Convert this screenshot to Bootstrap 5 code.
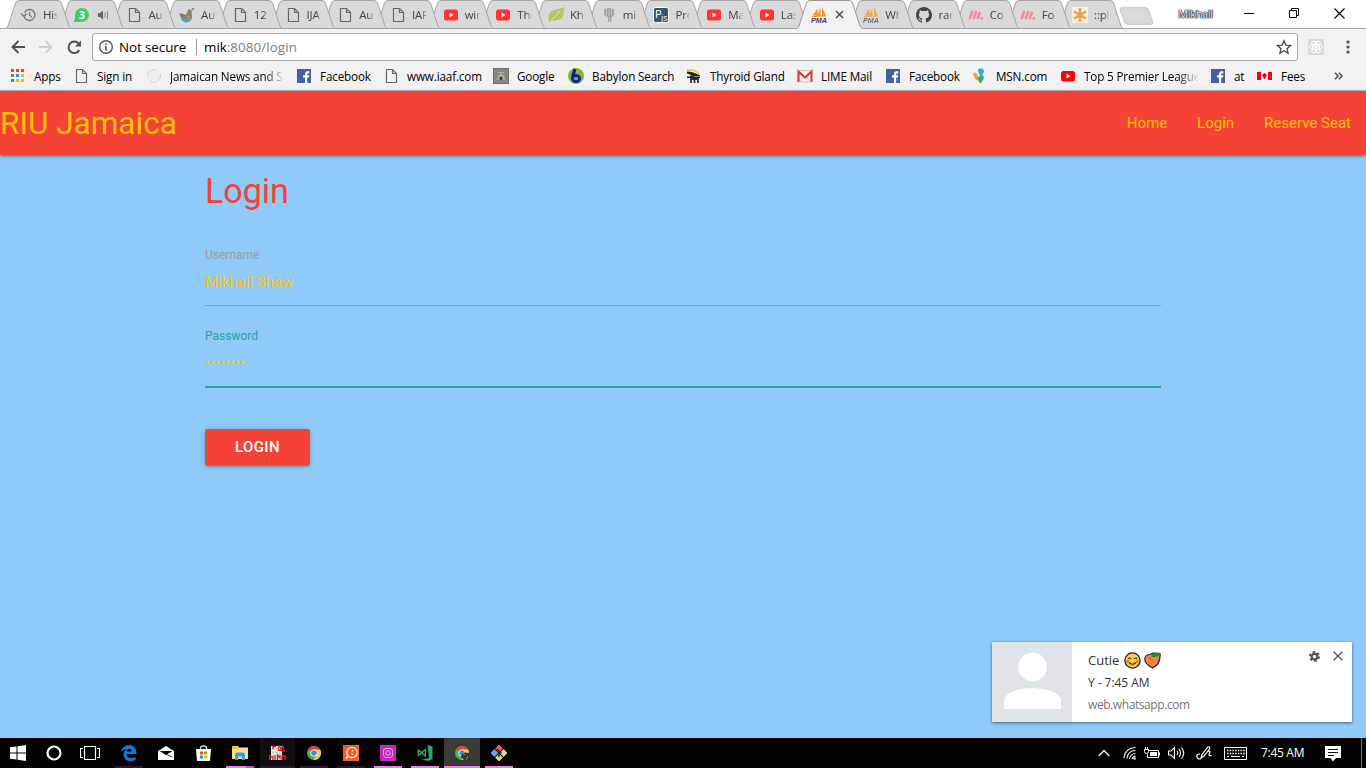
<!DOCTYPE html>
<html lang="en">
<head>
<meta charset="utf-8">
<meta name="viewport" content="width=device-width, initial-scale=1">
<title>RIU Jamaica</title>
<link href="https://cdn.jsdelivr.net/npm/bootstrap@5.3.0/dist/css/bootstrap.min.css" rel="stylesheet">
<script src="https://cdn.jsdelivr.net/npm/bootstrap@5.3.0/dist/js/bootstrap.bundle.min.js"></script>
<style>
  body { width:1366px; height:768px; font-family:"Open Sans","Noto Sans",sans-serif; font-size:12px; line-height:16px; color:#000; }
  svg { display:block; flex:none; }
  /* browser tabs */
  .tabstrip { height:29px; background:#fff; padding-left:6px; border-bottom:1px solid #a6a6a6; }
  .btab { width:65px; height:29px; margin-right:-12.3px; padding:0 0 0 15px; flex:none; margin-bottom:-1px; }
  .btab.after { margin-right:-12.8px; }
  .btab .shape { position:absolute; left:0; top:0; z-index:-1; }
  .btab .ttl { width:19px; margin-left:6px; white-space:nowrap; color:#444; font-size:11.5px; letter-spacing:-.2px;
    -webkit-mask-image:linear-gradient(90deg,#000 50%,transparent 82%); mask-image:linear-gradient(90deg,#000 50%,transparent 82%); }
  .newtab { margin-left:9px; margin-top:7px; }
  .profile { font-size:11px; letter-spacing:-.35px; color:#fff; text-shadow:0 0 1px #000,0 0 1px #000,0 0 1px #000,0 0 2px #333; width:38px; margin-left:24px; margin-top:6px; }
  .winbtns { margin-left:28px; gap:35px; margin-top:8px; }
  /* toolbar */
  .toolbar { height:36px; background:#f2f2f2; padding:4px 10px 0 10px; }
  .omni { width:1206px; height:28px; background:#fff; border:1px solid #a9a9a9; border-radius:3px; margin-left:10px; padding:0 5px; font-size:13.4px; letter-spacing:-.08px; }
  .omni .sep { width:1px; height:16px; background:#999; margin:0 7px 0 10px; }
  .bookbar { height:26px; background:#f2f2f2; padding:0 0 4px 10px; border-bottom:1px solid #b6b4b6; }
  .bm { flex:none; gap:8px; white-space:nowrap; font-size:11.7px; letter-spacing:-.15px; }
  .fadeout { -webkit-mask-image:linear-gradient(90deg,#000 82%,transparent); mask-image:linear-gradient(90deg,#000 82%,transparent); }
  /* web page */
  .site { height:647px; background:#90caf9; font-family:Roboto,sans-serif; }
  .sitenav { height:64px; background:#f44336; padding:0; box-shadow:0 2px 2px 0 rgba(0,0,0,.14),0 3px 1px -2px rgba(0,0,0,.12),0 1px 5px 0 rgba(0,0,0,.2); }
  .sitenav .navbar-brand { color:#ffc107; font-size:31.5px; line-height:64px; padding:2px 0 0; margin:0; }
  .sitenav .navbar-nav .nav-link { color:#ffc107; font-size:15px; line-height:64px; padding:0 15px; }
  .formwrap { width:956px; margin:0 auto; }
  .formwrap h4 { font-size:34.2px; line-height:38px; font-weight:400; color:#f44336; margin:17px 0 0; letter-spacing:-.1px; }
  .fld label { display:block; font-size:12px; line-height:14px; color:#9e9e9e; }
  .fld .val { height:44px; font-size:15px; line-height:41px; color:#ffc107; border-bottom:1px solid #9e9e9e; }
  .fld.on label { color:#26a69a; }
  .fld.on .val { border-bottom:2px solid #26a69a; height:45px; }
  .dots { letter-spacing:-.1px; }
  .caret { width:1px; height:17px; background:#ffc107; }
  .btn-red { width:105px; height:36px; background:#f44336; color:#fff; border:0; border-radius:2px; font-size:15px; line-height:36px; padding:0; letter-spacing:.4px; font-weight:500;
    box-shadow:0 2px 2px 0 rgba(0,0,0,.14),0 3px 1px -2px rgba(0,0,0,.12),0 1px 5px 0 rgba(0,0,0,.2); }
  .btn-red:hover { background:#f44336; color:#fff; }
  /* notification */
  .note { position:absolute; right:14px; bottom:16px; width:360px; height:80px; background:#fff; box-shadow:0 1px 3px rgba(0,0,0,.5); font-family:"Open Sans",sans-serif; }
  .note .who { font-size:13px; line-height:18px; color:#333; }
  .note .msg { color:#333; letter-spacing:-.05px; }
  .note .src { color:#777; font-size:12px; letter-spacing:-.42px; }
  /* taskbar */
  .taskbar { height:30px; background:#040301; color:#fff; }
  .tk { width:28px; margin-right:9px; height:30px; padding-top:2px; flex:none; border-bottom:2px solid transparent; }
  .tk.idle { border-color:#2b182c; }
  .tk.run { border-color:#f27bee; }
  .tk.multi { border-image:linear-gradient(90deg,#f27bee 70%,#b85fb8 70%) 1; border-width:0 0 2px; }
  .tk.front { width:36px; margin:0 5px 0 -4px; background:#3b3a39; }
</style>
</head>
<body class="d-flex flex-column overflow-hidden m-0">

<svg width="0" height="0" class="position-absolute">
  <defs>
    <symbol id="tab" viewBox="0 0 65 29"><path d="M0 28.500 2 26 9.500 3Q10.300 .5 13 .5H52Q54.500 .5 55.500 3L63 26 65 28.500Z" fill="#d9d9d9" stroke="#a6a6a6"/></symbol>
    <symbol id="page" viewBox="0 0 16 16"><path d="M3.500 1.500H9.500L13.500 5.500V14.500H3.500ZM9.500 1.500V5.500H13.500" fill="none" stroke="#666" stroke-width="1.200"/></symbol>
    <symbol id="yt" viewBox="0 0 16 16"><rect x="1" y="2.500" width="14" height="11" rx="2.500" fill="#f33"/><path d="M6.500 5.500V10.500L10.500 8Z" fill="#fff"/></symbol>
    <symbol id="fb" viewBox="0 0 16 16"><path d="M1 1H15V15H1Z" fill="#4460a0"/><path d="M9 15V9.500H7V7.300H9V5.800Q9 3.300 11.500 3.300H13.300V5.400H12Q11.200 5.400 11.200 6.200V7.300H13.300L13 9.500H11.200V15Z" fill="#fff"/></symbol>
    <symbol id="pma" viewBox="0 0 16 16"><path d="M6.500 1.500V8.500H1.500ZM11 0 15 8.500 11 9ZM9.500 1V9H5.500Z" fill="#f8981d"/><path d="M1 9.500 15 9" stroke="#f8981d"/><text x="0" y="15.600" font-family="Liberation Sans" font-weight="bold" font-style="italic" font-size="7" textLength="16" lengthAdjust="spacingAndGlyphs" fill="#3f3f78">PMA</text></symbol>
    <symbol id="mm" viewBox="0 0 16 16"><path d="M1.500 12 4.500 4M5.500 12 8.500 4M9.500 12 12 5" stroke="#f58a95" stroke-width="2.500"/><circle cx="13.800" cy="11.300" r="1.300" fill="#f58a95"/></symbol>
    <symbol id="chrome" viewBox="0 0 16 16"><circle cx="8" cy="8" r="7" fill="#4caf50"/><path d="M8 8 1.900 4.500A7 7 0 0 1 14.100 4.500Z" fill="#e0453a"/><path d="M8 4.500H14.100A7 7 0 0 1 7.500 15L11 9.700Z" fill="#fbc92e"/><circle cx="8" cy="8" r="3.600" fill="#fff"/><circle cx="8" cy="8" r="2.800" fill="#4285f4"/></symbol>
  </defs>
</svg>

<!-- tab strip -->
<header class="tabstrip d-flex flex-shrink-0">
  <div class="btab position-relative d-flex align-items-center" style="z-index:30"><svg class="shape" width="65" height="29"><use href="#tab"/></svg>
    <svg width="16" height="16" viewBox="0 0 16 16" fill="none" stroke="#777" stroke-width="1.300"><path d="M3 9A5.500 5.500 0 1 0 3.500 5.500M0 6.500 3 9.500 5.500 6.500M8.500 5V8.500L11 10"/></svg><span class="ttl">His</span></div>
  <div class="btab position-relative d-flex align-items-center" style="z-index:29"><svg class="shape" width="65" height="29"><use href="#tab"/></svg>
    <svg width="16" height="16" viewBox="0 0 16 16"><path d="M0 15 1 11V8A7 7 0 1 1 8 15Z" fill="#45cb62"/><text x="5" y="12" font-size="10.500" font-weight="bold" fill="#fff">3</text></svg>
    <svg width="12" height="12" viewBox="0 0 12 12" class="ms-2"><path d="M0 4H2L5 1.500V10.500L2 8H0Z" fill="#666"/><path d="M7 3.500V8.500M9.500 2V10" stroke="#888"/></svg></div>
  <div class="btab position-relative d-flex align-items-center" style="z-index:28"><svg class="shape" width="65" height="29"><use href="#tab"/></svg><svg width="16" height="16"><use href="#page"/></svg><span class="ttl">Au</span></div>
  <div class="btab position-relative d-flex align-items-center" style="z-index:27"><svg class="shape" width="65" height="29"><use href="#tab"/></svg>
    <svg width="16" height="16" viewBox="0 0 16 16"><path d="M0 6.500Q5 6 7 8L9.500 2 12.500 3 13 11 9 15 3 13Z" fill="#8a8063"/><path d="M2 10Q6 13 13.500 10Q12 15.500 6 15.500Q2 14 2 10" fill="#38a6d8"/><path d="M8 8 12 9.500 9 13Z" fill="#ef7d3b"/><circle cx="14" cy="2" r="1.300" fill="#55b95a"/></svg><span class="ttl">Au</span></div>
  <div class="btab position-relative d-flex align-items-center" style="z-index:26"><svg class="shape" width="65" height="29"><use href="#tab"/></svg><svg width="16" height="16"><use href="#page"/></svg><span class="ttl">12</span></div>
  <div class="btab position-relative d-flex align-items-center" style="z-index:25"><svg class="shape" width="65" height="29"><use href="#tab"/></svg><svg width="16" height="16"><use href="#page"/></svg><span class="ttl">IJA</span></div>
  <div class="btab position-relative d-flex align-items-center" style="z-index:24"><svg class="shape" width="65" height="29"><use href="#tab"/></svg><svg width="16" height="16"><use href="#page"/></svg><span class="ttl">Au</span></div>
  <div class="btab position-relative d-flex align-items-center" style="z-index:23"><svg class="shape" width="65" height="29"><use href="#tab"/></svg><svg width="16" height="16"><use href="#page"/></svg><span class="ttl">IAF</span></div>
  <div class="btab position-relative d-flex align-items-center" style="z-index:22"><svg class="shape" width="65" height="29"><use href="#tab"/></svg><svg width="16" height="16"><use href="#yt"/></svg><span class="ttl">wir</span></div>
  <div class="btab position-relative d-flex align-items-center" style="z-index:21"><svg class="shape" width="65" height="29"><use href="#tab"/></svg><svg width="16" height="16"><use href="#yt"/></svg><span class="ttl">The</span></div>
  <div class="btab position-relative d-flex align-items-center" style="z-index:20"><svg class="shape" width="65" height="29"><use href="#tab"/></svg>
    <svg width="16" height="16" viewBox="0 0 16 16"><path d="M1 14Q-1 5 6 3Q12 2 16 0Q17 12 10 13Q6 14.500 3.500 13L1.500 15.500Z" fill="#b1c763"/><path d="M3 13Q8 10 12 4" stroke="#d9e0bd" fill="none"/></svg><span class="ttl">Kh</span></div>
  <div class="btab position-relative d-flex align-items-center" style="z-index:19"><svg class="shape" width="65" height="29"><use href="#tab"/></svg>
    <svg width="16" height="16" viewBox="0 0 16 16"><path d="M3 2.500Q8-.5 13 2.500V8L10.500 10V14L8.500 15.500 7 14V10L3.500 8.500Z" fill="#a0a0a0"/><path d="M5.500 2V8.500M8 2V9M10.500 2V8.500M8.500 10V14" stroke="#d0d0d0" stroke-width=".8" fill="none"/></svg><span class="ttl">mi</span></div>
  <div class="btab position-relative d-flex align-items-center" style="z-index:18"><svg class="shape" width="65" height="29"><use href="#tab"/></svg>
    <svg width="16" height="16" viewBox="0 0 16 16"><rect x=".5" y=".5" width="15" height="15" rx="2" fill="#325878" stroke="#fff"/><text x="2" y="11" font-size="11" fill="#fff">P</text><text x="8" y="13.500" font-size="8.500" fill="#fff">js</text></svg><span class="ttl">Pro</span></div>
  <div class="btab position-relative d-flex align-items-center" style="z-index:17"><svg class="shape" width="65" height="29"><use href="#tab"/></svg><svg width="16" height="16"><use href="#yt"/></svg><span class="ttl">Ma</span></div>
  <div class="btab position-relative d-flex align-items-center" style="z-index:16"><svg class="shape" width="65" height="29"><use href="#tab"/></svg><svg width="16" height="16"><use href="#yt"/></svg><span class="ttl">Las</span></div>
  <div class="btab position-relative d-flex align-items-center" style="z-index:40;padding-left:14px"><svg class="shape" width="65" height="29" viewBox="0 0 65 29"><path d="M0 28.500 2 26 9.500 3Q10.300 .5 13 .5H52Q54.500 .5 55.500 3L63 26 65 28.500V29H0Z" fill="#f2f2f2"/><path d="M0 28.500 2 26 9.500 3Q10.300 .5 13 .5H52Q54.500 .5 55.500 3L63 26 65 28.500" fill="none" stroke="#999"/></svg>
    <svg width="16" height="16"><use href="#pma"/></svg><svg width="9" height="9" viewBox="0 0 9 9" class="ms-2"><path d="M1 1 8 8M8 1 1 8" stroke="#555" stroke-width="1.600"/></svg></div>
  <div class="btab after position-relative d-flex align-items-center" style="z-index:14;padding-left:14px"><svg class="shape" width="65" height="29"><use href="#tab"/></svg><svg width="16" height="16" opacity=".7"><use href="#pma"/></svg><span class="ttl">Wh</span></div>
  <div class="btab after position-relative d-flex align-items-center" style="z-index:13"><svg class="shape" width="65" height="29"><use href="#tab"/></svg>
    <svg width="16" height="16" viewBox="0 0 16 16"><path fill="#444" d="M8 0C3.580 0 0 3.580 0 8c0 3.540 2.290 6.530 5.470 7.590.4.070.55-.17.55-.38 0-.19-.01-.82-.01-1.490-2.010.37-2.530-.49-2.690-.94-.09-.23-.48-.94-.82-1.130-.28-.15-.68-.52-.01-.53.63-.01 1.080.58 1.230.82.72 1.210 1.870.87 2.330.66.070-.52.280-.87.510-1.070-1.780-.2-3.640-.89-3.640-3.950 0-.87.310-1.590.82-2.150-.08-.2-.36-1.020.08-2.120 0 0 .67-.21 2.200.82a7.600 7.600 0 0 1 4 0c1.530-1.040 2.200-.82 2.200-.82.44 1.100.16 1.920.08 2.120.51.560.82 1.270.82 2.150 0 3.070-1.870 3.750-3.650 3.950.29.250.54.730.54 1.480 0 1.070-.01 1.930-.01 2.200 0 .21.150.46.55.38A8 8 0 0 0 8 0z"/></svg><span class="ttl">ran</span></div>
  <div class="btab after position-relative d-flex align-items-center" style="z-index:12;padding-left:14px"><svg class="shape" width="65" height="29"><use href="#tab"/></svg><svg width="16" height="16"><use href="#mm"/></svg><span class="ttl">Co</span></div>
  <div class="btab after position-relative d-flex align-items-center" style="z-index:11;padding-left:14px"><svg class="shape" width="65" height="29"><use href="#tab"/></svg><svg width="16" height="16"><use href="#mm"/></svg><span class="ttl">Fo</span></div>
  <div class="btab after position-relative d-flex align-items-center" style="z-index:10;padding-left:14px"><svg class="shape" width="65" height="29"><use href="#tab"/></svg>
    <svg width="16" height="16" viewBox="0 0 16 16"><path d="M0 0H16V16H0Z" fill="#fbeedd"/><path d="M8 1V15M2 4.500 14 11.500M14 4.500 2 11.500" stroke="#e8a050" stroke-width="2.400"/></svg><span class="ttl">::pl</span></div>
  <svg class="newtab" width="35" height="18" viewBox="0 0 36 18"><path d="M3 .5H27Q29 .5 30 2L34.500 15Q35 17.500 33 17.500H9Q7 17.500 6 16L1 3Q.5 .5 3 .5Z" fill="#d9d9d9" stroke="#c4c4c4"/></svg>
  <span class="profile">Mikhail</span>
  <div class="winbtns d-flex">
    <svg width="10" height="11" viewBox="0 0 10 11"><path d="M0 5.500H10" stroke="#000"/></svg>
    <svg width="10" height="11" viewBox="0 0 10 11" fill="none" stroke="#000"><path d="M.5 2.500H7.500V9.500H.5ZM2.500 2.500V.5H9.500V7.500H7.500"/></svg>
    <svg width="11" height="11" viewBox="0 0 11 11"><path d="M.5 .5 10.500 10.500M10.500 .5 .5 10.500" stroke="#000" stroke-width="1.100"/></svg>
  </div>
</header>

<!-- address bar -->
<div class="toolbar d-flex flex-shrink-0">
  <div class="d-flex align-items-center gap-3" style="height:28px;width:72px;padding-left:1px">
    <svg width="14" height="14" viewBox="0 0 14 14" fill="none" stroke="#505050" stroke-width="1.900"><path d="M14 7H2M7.500 1 1.500 7 7.500 13"/></svg>
    <svg width="14" height="14" viewBox="0 0 14 14" fill="none" stroke="#d0d0d0" stroke-width="1.900" style="margin-left:-2px"><path d="M0 7H12M6.500 1 12.500 7 6.500 13"/></svg>
    <svg width="15" height="15" viewBox="0 0 15 15" style="margin-left:-2px"><path d="M12.300 10A5.700 5.700 0 1 1 11.500 3.500" fill="none" stroke="#505050" stroke-width="2"/><path d="M14 .5V6.500H8Z" fill="#505050"/></svg>
  </div>
  <div class="omni d-flex align-items-center">
    <svg width="16" height="16" viewBox="0 0 16 16"><circle cx="8" cy="8" r="6.300" fill="none" stroke="#555" stroke-width="1.400"/><path d="M8 7V11.500M8 4.300V5.900" stroke="#555" stroke-width="1.600"/></svg>
    <span style="margin-left:5px">Not secure</span><span class="sep"></span><span>mik<span style="color:#808080;letter-spacing:.08px">:8080/login</span></span>
    <svg class="ms-auto" width="16" height="16" viewBox="0 0 16 16"><path d="M8 1.800 9.900 6.100 14.600 6.500 11 9.600 12.100 14.200 8 11.700 3.900 14.200 5 9.600 1.400 6.500 6.100 6.100Z" fill="none" stroke="#505050" stroke-width="1.400"/></svg>
  </div>
  <svg width="16" height="16" viewBox="0 0 16 16" style="margin:6px 0 0 10px"><path d="M0 0H16V16H0Z" fill="#d9d9d9"/><g fill="none" stroke="#fff"><ellipse cx="8" cy="8" rx="6.500" ry="2.600"/><ellipse cx="8" cy="8" rx="6.500" ry="2.600" transform="rotate(60 8 8)"/><ellipse cx="8" cy="8" rx="6.500" ry="2.600" transform="rotate(120 8 8)"/></g><circle cx="8" cy="8" r="1.400" fill="#fff"/></svg>
  <svg width="4" height="14" viewBox="0 0 4 14" fill="#505050" style="margin:7px 0 0 22px"><circle cx="2" cy="2" r="1.600"/><circle cx="2" cy="7" r="1.600"/><circle cx="2" cy="12" r="1.600"/></svg>
</div>

<!-- bookmarks -->
<div class="bookbar d-flex align-items-center flex-shrink-0">
  <div class="bm d-flex align-items-center" style="width:63px"><svg width="16" height="16" viewBox="0 0 16 16"><path d="M1 1h3v3H1zM6 1h3v3H6zM11 1h3v3h-3z" fill="#ea4335"/><path d="M1 6h3v3H1zM1 11h3v3H1z" fill="#34a853"/><path d="M6 6h3v3H6z" fill="#2f8df4"/><path d="M11 6h3v3h-3zM6 11h3v3H6zM11 11h3v3h-3z" fill="#fbb514"/></svg>Apps</div>
  <div class="bm d-flex align-items-center" style="width:73px"><svg width="16" height="16"><use href="#page"/></svg>Sign in</div>
  <div class="bm d-flex align-items-center" style="width:150px"><svg width="16" height="16" viewBox="0 0 16 16"><circle cx="8" cy="8" r="6.500" fill="#eceff2" stroke="#cdd6de" stroke-dasharray="14 5"/></svg><span class="fadeout" style="width:115px">Jamaican News and S</span></div>
  <div class="bm d-flex align-items-center" style="width:87px"><svg width="16" height="16"><use href="#fb"/></svg>Facebook</div>
  <div class="bm d-flex align-items-center" style="width:110px"><svg width="16" height="16"><use href="#page"/></svg>www.iaaf.com</div>
  <div class="bm d-flex align-items-center" style="width:75px"><svg width="16" height="16" viewBox="0 0 16 16"><path d="M0 0H16V16H0Z" fill="#6c706b"/><path d="M1 1H15V15H1Z" fill="#858984"/><path d="M5 4H11V8L12 12H4L5 8Z" fill="#aab59e"/><path d="M5 6H7M9 6H11M7 9H9V12H7Z" stroke="#5b6557"/></svg>Google</div>
  <div class="bm d-flex align-items-center" style="width:118px"><svg width="16" height="16" viewBox="0 0 16 16"><circle cx="8" cy="8" r="8" fill="#84b83d"/><path d="M7 1 4.500 9" stroke="#1a1c9c" stroke-width="3.200"/><ellipse cx="8" cy="10.500" rx="3.700" ry="3" fill="none" stroke="#1a1c9c" stroke-width="2.800"/></svg>Babylon Search</div>
  <div class="bm d-flex align-items-center" style="width:111px"><svg width="16" height="16" viewBox="0 0 16 16"><path d="M1 2Q8 1 14 6" fill="none" stroke="#edd23c" stroke-width="1.800"/><path d="M1 3.500Q7 3.500 14 7.500V8.500H9L1 5.500ZM1 8.500H4L5 7 9 9H14V10H1Z" fill="#222"/><path d="M4 11H13M5 11V15M8.500 11V15M12 11V15" fill="none" stroke="#333" stroke-width="1.800"/></svg>Thyroid Gland</div>
  <div class="bm d-flex align-items-center" style="width:88px"><svg width="16" height="16" viewBox="0 0 16 16"><path d="M1 3H15V14H1Z" fill="#fafafa"/><path d="M1.500 14V3.500L8 9.500 14.500 3.500V14" fill="none" stroke="#db3b35" stroke-width="2.200"/><path d="M3 13.500 6.500 9M13 13.500 9.500 9M1 2.700H15M1 14H15" stroke="#dfa5a0" stroke-width=".8"/></svg>LIME Mail</div>
  <div class="bm d-flex align-items-center" style="width:87px"><svg width="16" height="16"><use href="#fb"/></svg>Facebook</div>
  <div class="bm d-flex align-items-center" style="width:88px"><svg width="16" height="16" viewBox="0 0 16 16"><path d="M6 1Q12-.5 12 3.500L9.500 9Q5.500 5 6 1Z" fill="#20b3ea"/><path d="M1 6Q3 3 5 6L8 13Q2 12 1 6Z" fill="#f5a23a"/><path d="M9 7Q12 7 12 10L10.500 13 7 11Z" fill="#41ad8b"/><path d="M5 10 9 7 10 14 8 15.500Z" fill="#41ad4b"/></svg>MSN.com</div>
  <div class="bm d-flex align-items-center" style="width:150px"><svg width="16" height="16" viewBox="0 0 16 16"><rect x="1" y="3" width="14" height="10.500" rx="2.500" fill="#f00"/><path d="M6.500 5.500V10.500L10.500 8Z" fill="#fff"/></svg><span class="fadeout" style="width:115px">Top 5 Premier League</span></div>
  <div class="bm d-flex align-items-center" style="width:47px"><svg width="16" height="16"><use href="#fb"/></svg>at</div>
  <div class="bm d-flex align-items-center" style="width:77px"><svg width="16" height="16" viewBox="0 0 16 16"><path d="M0 4H15V12H0Z" fill="#fff"/><path d="M0 4H4V12H0ZM11 4H15V12H11Z" fill="#f00"/><path d="M7.500 5V11M5 7.500H10M6 9.500 9 6M6 6 9 9.500" stroke="#f00" stroke-width="1.200"/></svg>Fees</div>
  <svg width="9" height="8" viewBox="0 0 9 8" fill="none" stroke="#505050" stroke-width="1.600"><path d="M1 .8 4 4 1 7.200M5 .8 8 4 5 7.200"/></svg>
</div>

<!-- web page -->
<main class="site position-relative flex-shrink-0">
  <nav class="sitenav navbar navbar-expand flex-nowrap justify-content-between">
    <a class="navbar-brand" href="#">RIU Jamaica</a>
    <div class="navbar-nav">
      <a class="nav-link" href="#">Home</a><a class="nav-link" href="#">Login</a><a class="nav-link" href="#">Reserve Seat</a>
    </div>
  </nav>
  <div class="formwrap">
    <h4>Login</h4>
    <div class="fld" style="margin-top:38px"><label>Username</label><div class="val">Mikhail Shaw</div></div>
    <div class="fld on" style="margin-top:23px"><label>Password</label><div class="val d-flex"><span class="dots">••••••••</span><span class="caret" style="margin-top:12px"></span></div></div>
    <button class="btn btn-red d-block" style="margin-top:41px">LOGIN</button>
  </div>

  <aside class="note d-flex">
    <svg width="80" height="80" viewBox="0 0 80 80"><path d="M0 0H80V80H0Z" fill="#dfe5e7"/><circle cx="40.500" cy="25" r="14.300" fill="#fff"/><path d="M12 67V58Q15 47 40.500 46 66 47 69 58V67Z" fill="#fff"/></svg>
    <div class="flex-grow-1" style="padding:9px 0 0 16px">
      <div class="who d-flex align-items-center">Cutie
        <svg width="17" height="17" viewBox="0 0 17 17" style="margin-left:5px"><circle cx="8.500" cy="8.500" r="7.600" fill="#ffc83d" stroke="#222" stroke-width="1.300"/><circle cx="3.800" cy="9.500" r="1.400" fill="#ef6b4a"/><circle cx="13.200" cy="9.500" r="1.400" fill="#ef6b4a"/><path d="M4 7Q5.500 5 7 7M10 7Q11.500 5 13 7M5 10.500Q8.500 14 12 10.500" fill="none" stroke="#333" stroke-width="1.100"/></svg>
        <svg width="17" height="17" viewBox="0 0 17 17" style="margin-left:3px"><path d="M8.500 16Q1 12 .8 7.500 .8 2.500 6 2.500 9 .5 16 1.500 17 12 8.500 16Z" fill="#f98346" stroke="#222" stroke-width="1.200"/><path d="M7 4.500Q9 0 16.300 1Q15 6 8.500 4.800Z" fill="#169222"/><path d="M4.500 5.500Q7 5 6.500 8" fill="none" stroke="#c94a2c"/></svg>
      </div>
      <div class="msg" style="margin-top:6px">Y - 7:45 AM</div>
      <div class="src" style="margin-top:6px">web.whatsapp.com</div>
    </div>
    <div class="d-flex" style="padding:9px 9px 0 0;gap:13px">
      <svg width="11" height="11" viewBox="0 0 11 11"><circle cx="5.500" cy="5.500" r="4.500" fill="none" stroke="#555" stroke-width="2" stroke-dasharray="2.400 2.310"/><circle cx="5.500" cy="5.500" r="2.900" fill="none" stroke="#555" stroke-width="2.200"/></svg>
      <svg width="10" height="10" viewBox="0 0 10 10"><path d="M.7 .7 9.300 9.300M9.300 .7 .7 9.300" stroke="#555" stroke-width="1.300"/></svg>
    </div>
  </aside>
</main>

<!-- taskbar -->
<footer class="taskbar d-flex flex-shrink-0">
  <div class="tk d-flex justify-content-center align-items-center" style="margin:0 8px 0 4px"><svg width="16" height="16" viewBox="0 0 16 16" fill="#fff"><path d="M0 2.300 6.500 1.400V7.500H0ZM7.500 1.200 16 0V7.500H7.500ZM0 8.500H6.500V14.600L0 13.700ZM7.500 8.500H16V16L7.500 14.800Z"/></svg></div>
  <div class="tk d-flex justify-content-center align-items-center" style="margin-right:8px"><svg width="16" height="16" viewBox="0 0 16 16"><circle cx="8" cy="8" r="6.500" fill="none" stroke="#fff" stroke-width="2.200"/></svg></div>
  <div class="tk d-flex justify-content-center align-items-center" style="margin-right:11px"><svg width="20" height="16" viewBox="0 0 20 16" fill="none" stroke="#fff"><path d="M4.500 1.500H15.500V14.500H4.500ZM3 3.500H.5V12.500H3M17 3.500H19.500V12.500H17" stroke-width="1.200"/></svg></div>
  <div class="tk idle d-flex justify-content-center align-items-center"><svg width="16" height="16" viewBox="0 0 16 16"><path d="M0 7Q1.500 0 8.500 0 15.500 .5 15.500 9H5.500Q6 13 10 13 12.500 13 14.500 12V15Q12.500 16 9 16 2.500 15.500 2.500 9.500 2.500 6 6 4 2 4.500 0 7ZM5.700 6.500H10.700Q10.500 3.800 8.300 3.800 6 4 5.700 6.500Z" fill="#0b7ad8"/></svg></div>
  <div class="tk d-flex justify-content-center align-items-center"><svg width="16" height="14" viewBox="0 0 16 14"><path d="M0 5 8 0 16 5V14H0Z" fill="#fff"/><path d="M1.500 5H14.500L8 9Z" fill="#080808"/><path d="M7 7.500 14 11" stroke="#080808" stroke-width=".8"/></svg></div>
  <div class="tk d-flex justify-content-center align-items-center"><svg width="15" height="16" viewBox="0 0 15 16"><path d="M4.500 5V3Q4.500 1 7.500 1T10.500 3V5" fill="none" stroke="#ddd" stroke-width="1.300"/><path d="M0 4H15L14 16H1Z" fill="#fff"/><path d="M4 6.500h3v3H4z" fill="#f25022"/><path d="M8 6.500h3v3H8z" fill="#7fba00"/><path d="M4 10.500h3v3H4z" fill="#00a4ef"/><path d="M8 10.500h3v3H8z" fill="#ffb900"/></svg></div>
  <div class="tk run multi d-flex justify-content-center align-items-center"><svg width="16" height="14" viewBox="0 0 16 14"><path d="M0 0H6L7 1.500H16V13H0Z" fill="#fbe08f"/><path d="M0 0H6L7 1.500V3H0Z" fill="#f1bd3c"/><path d="M3 14V9Q3 6.500 5.500 6.500H10.500Q13 6.500 13 9V14H10V10.500H6V14Z" fill="#2ba7e0"/></svg></div>
  <div class="tk idle d-flex justify-content-center align-items-center" style="width:35px;margin:0 5px 0 -3px;background:#100e0e"><svg width="17" height="16" viewBox="0 0 17 16"><path d="M2 1H13V15H2Z" fill="#e5e5e5"/><path d="M4 1V14M7.500 4V10M11 5V11" stroke="#aaa" stroke-dasharray="1 2"/><path d="M4 4V1.500H7M9 4 10.500 1 12 4 13.500 1 15 4M.5 10V15M.5 12H4V15M6 10V15M8.500 15V10L11 13V10M13 15V11H16V15M9 5 16 6" fill="none" stroke="#e21c23" stroke-width="1.300"/></svg></div>
  <div class="tk idle d-flex justify-content-center align-items-center"><svg width="16" height="16"><use href="#chrome"/></svg></div>
  <div class="tk idle d-flex justify-content-center align-items-center"><svg width="16" height="16" viewBox="0 0 16 16"><path d="M0 0H16V16H0Z" fill="#f05f2a"/><circle cx="9" cy="7.500" r="5.200" fill="none" stroke="#eee" stroke-width="1.200"/><path d="M11.500 4.500A3 3 0 1 0 11.500 10.500L8.500 7.500Z" fill="#ddd"/><path d="M5 11 3 13.500" stroke="#eee" stroke-width="2"/></svg></div>
  <div class="tk run d-flex justify-content-center align-items-center"><svg width="16" height="16" viewBox="0 0 16 16"><path d="M0 0H16V16H0Z" fill="#c927c0"/><g fill="none" stroke="#f2a4ec"><rect x="3.500" y="3.500" width="9" height="9" rx="2.500"/><circle cx="8" cy="8" r="2.200"/></g></svg></div>
  <div class="tk run d-flex justify-content-center align-items-center"><svg width="16" height="16" viewBox="0 0 16 16"><path d="M10.500 0 15.500 1.500V14L11 16 5 14.500 12 13Z" fill="#2aa866"/><path d="M1.300 5V10.500L8.500 4.500V11L1.300 5Z" fill="none" stroke="#2aa866" stroke-width="1.400"/></svg></div>
  <div class="tk run front d-flex justify-content-center align-items-center"><svg width="16" height="16" viewBox="0 0 16 16"><use href="#chrome"/><path d="M8 9 11 7.500 15.500 8V15H10L7 12Z" fill="#353231"/><path d="M9 8.500 11 10M12 15 14 11" stroke="#888"/></svg></div>
  <div class="tk run d-flex justify-content-center align-items-center"><svg width="16" height="16" viewBox="0 0 16 16"><g transform="rotate(45 8 8)"><path d="M2 2h5.500v5.500h-5.500z" fill="#e85a52"/><path d="M8.500 2h5.500v5.500h-5.500z" fill="#e8d3a0"/><path d="M8.500 8.500h5.500v5.500h-5.500z" fill="#d8dc62"/><path d="M2 8.500h5.500v5.500h-5.500z" fill="#6ba4e4"/></g><path d="M6 4 10.500 8.500M8 7V12" stroke="#222" stroke-width="1.400"/></svg></div>

  <div class="d-flex align-items-center ms-auto" style="width:268px;height:30px">
    <svg width="12" height="8" viewBox="0 0 12 8"><path d="M.8 7 6 1.500 11.200 7" fill="none" stroke="#fff" stroke-width="1.300"/></svg>
    <svg width="14" height="14" viewBox="0 0 14 14" style="margin-left:13px" fill="none" stroke="#eee" stroke-width="1.100"><path d="M1 12A11 11 0 0 1 12.500 1.500M4 12.500A8 8 0 0 1 12.500 4.500M6.500 13A6 6 0 0 1 12.500 7.500M9 13A4 4 0 0 1 12.500 10"/><circle cx="11.500" cy="12.500" r=".8"/></svg>
    <svg width="16" height="12" viewBox="0 0 16 12" style="margin-left:7px" fill="none" stroke="#fff"><path d="M4.500 3.500H14.500V10.500H3.500V7.500M.5 2.500H4.500V4.500Q4.500 6.500 2.500 6.500T.5 4.500ZM1.500 2.500V0M3.500 2.500V0M15.500 5.500V8.500"/><path d="M6 5H13V9H6Z" fill="#fff" stroke="none"/></svg>
    <svg width="17" height="14" viewBox="0 0 17 14" style="margin-left:8px" fill="none" stroke="#fff"><path d="M.5 5H3L6.500 1.500V12.500L3 9H.5ZM9 5Q10.500 7 9 9M11 3Q14 7 11 11M13.500 1.500Q18 7 13.500 12.500" stroke-width="1.100"/></svg>
    <svg width="16" height="14" viewBox="0 0 16 14" style="margin-left:11px" fill="none" stroke="#fff" stroke-width="1.200"><path d="M5 12 6 8.500 12 1Q14.500 0 13.500 3L8 10ZM4 8Q0 8 1 11T5 12.500M12 5Q15 5 13.500 7.500T15.500 9.500"/></svg>
    <svg width="23" height="13" viewBox="0 0 23 13" style="margin-left:12px" fill="none" stroke="#fff"><path d="M.5 .5H22.500V12.500H.5Z"/><path d="M3 3.500H21M3 6.500H21" stroke-dasharray="1.500 1.200" stroke-width="1.300"/><path d="M3 9.500H5M7 9.500H16M18 9.500H20"/></svg>
    <span style="margin-left:14px;width:44px;letter-spacing:-.3px;white-space:nowrap">7:45 AM</span>
    <svg width="16" height="17" viewBox="0 0 16 17" style="margin-left:20px"><path d="M0 1H16V13H11L8 16.500 5.500 13H0Z" fill="#fff"/><path d="M3 4.500H13M3 7.500H13M3 10.500H9" stroke="#111"/></svg>
    <span style="width:1px;height:30px;background:#777;margin-left:20px"></span>
  </div>
</footer>
</body>
</html>
